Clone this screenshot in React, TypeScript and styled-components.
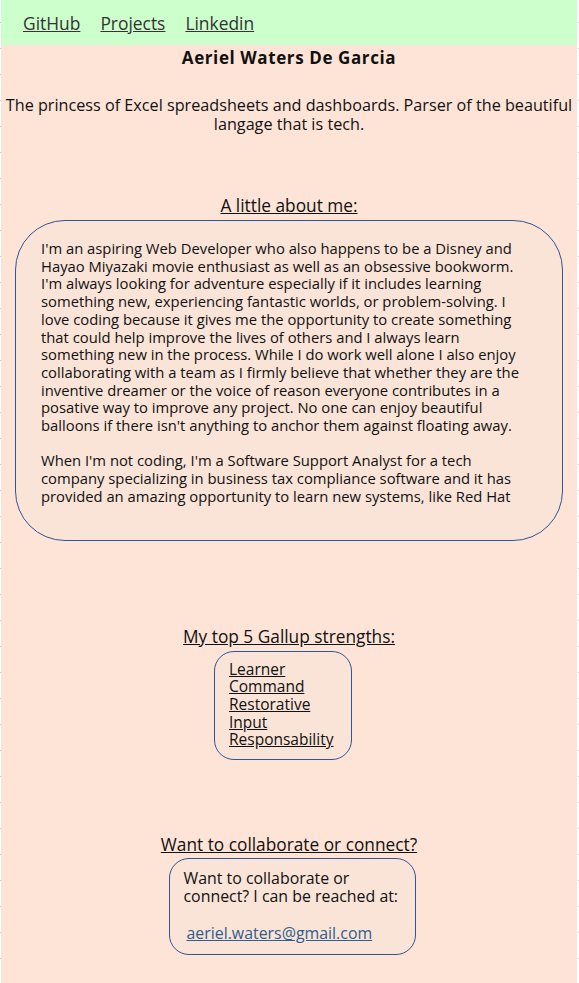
import React from "react";
import styled, { createGlobalStyle } from "styled-components";

const Global = createGlobalStyle`
  html {
    background:
      repeating-linear-gradient(to bottom, transparent 0 22px, #c9c9c9 22px 23px, transparent 23px 26px) left top / 1px 100% no-repeat,
      repeating-linear-gradient(to bottom, transparent 0 22px, #c9c9c9 22px 23px, transparent 23px 26px) right top / 1px 100% no-repeat,
      #ffffff;
  }
  body {
    margin: 0;
    font-family: "Open Sans", Lato, sans-serif;
    color: #111;
  }
`;

const Page = styled.div`
  margin: 0 2px 0 1px;
  background: #fde4d7;
  min-height: 983px;
  display: flex;
  flex-direction: column;
  align-items: center;
`;

const Nav = styled.nav`
  align-self: stretch;
  height: 45px;
  background: #ccffcc;
  display: flex;
  align-items: center;
  gap: 20px;
  padding-left: 22px;
`;

const NavLink = styled.a`
  color: #333;
  font-size: 17.4px;
  text-decoration: underline;
`;

const Name = styled.h1`
  margin: 2px 0 0;
  font-size: 17px;
  line-height: 22px;
  font-weight: 700;
  letter-spacing: 0.6px;
`;

const Tagline = styled.p`
  margin: 27px 0 0;
  font-size: 16.2px;
  line-height: 19px;
  text-align: center;
`;

const Heading = styled.h2<{ $top: number }>`
  margin: ${(p) => p.$top}px 0 0;
  font-size: 17.3px;
  font-weight: 400;
  text-decoration: underline;
  line-height: 19px;
`;

const Card = styled.div`
  margin-top: 5px;
  width: 548px;
  box-sizing: border-box;
  border: 1px solid #2f5597;
  border-radius: 50px;
  background: #fae4d8;
  padding: 19px 14px 34px 25px;
  font-size: 14.8px;
  line-height: 17.7px;
  white-space: nowrap;
`;

const Para = styled.p`
  margin: 0 0 17.7px;
  &:last-child {
    margin-bottom: 0;
  }
`;

const SmallBox = styled.div`
  margin-top: 5px;
  box-sizing: border-box;
  border: 1px solid #2f5597;
  border-radius: 20px;
  background: #fae4d8;
`;

const List = styled(SmallBox)`
  width: 138px;
  margin-right: 12px;
  padding: 9px 0 10px 14px;
  display: flex;
  flex-direction: column;
`;

const Strength = styled.a`
  color: #111;
  font-size: 15.5px;
  line-height: 17.7px;
  text-decoration: underline;
`;

const Contact = styled(SmallBox)`
  width: 247px;
  margin-top: 4px;
  margin-left: 6px;
  padding: 10px 14px 12px 14px;
  font-size: 15.9px;
  line-height: 18px;
`;

const Email = styled.a`
  display: inline-block;
  margin: 19px 0 0 3px;
  color: #2e5d8e;
  text-decoration: underline;
`;

export default function App() {
  return (
    <>
      <Global />
      <Page>
        <Nav>
          <NavLink href="#">GitHub</NavLink>
          <NavLink href="#">Projects</NavLink>
          <NavLink href="#">Linkedin</NavLink>
        </Nav>
        <Name>Aeriel Waters De Garcia</Name>
        <Tagline>
          The princess of Excel spreadsheets and dashboards. Parser of the beautiful langage that is tech.
        </Tagline>
        <Heading $top={62}>A little about me:</Heading>
        <Card>
          <Para>
            I'm an aspiring Web Developer who also happens to be a Disney and
            <br />
            Hayao Miyazaki movie enthusiast as well as an obsessive bookworm.
            <br />
            I'm always looking for adventure especially if it includes learning
            <br />
            something new, experiencing fantastic worlds, or problem-solving. I
            <br />
            love coding because it gives me the opportunity to create something
            <br />
            that could help improve the lives of others and I always learn
            <br />
            something new in the process. While I do work well alone I also enjoy
            <br />
            collaborating with a team as I firmly believe that whether they are the
            <br />
            inventive dreamer or the voice of reason everyone contributes in a
            <br />
            posative way to improve any project. No one can enjoy beautiful
            <br />
            balloons if there isn't anything to anchor them against floating away.
          </Para>
          <Para>
            When I'm not coding, I'm a Software Support Analyst for a tech
            <br />
            company specializing in business tax compliance software and it has
            <br />
            provided an amazing opportunity to learn new systems, like Red Hat
          </Para>
        </Card>
        <Heading $top={86}>My top 5 Gallup strengths:</Heading>
        <List>
          <Strength href="#">Learner</Strength>
          <Strength href="#">Command</Strength>
          <Strength href="#">Restorative</Strength>
          <Strength href="#">Input</Strength>
          <Strength href="#">Responsability</Strength>
        </List>
        <Heading $top={75}>Want to collaborate or connect?</Heading>
        <Contact>
          Want to collaborate or connect? I can be reached at:
          <br />
          <Email href="#">aeriel.waters@gmail.com</Email>
        </Contact>
      </Page>
    </>
  );
}
